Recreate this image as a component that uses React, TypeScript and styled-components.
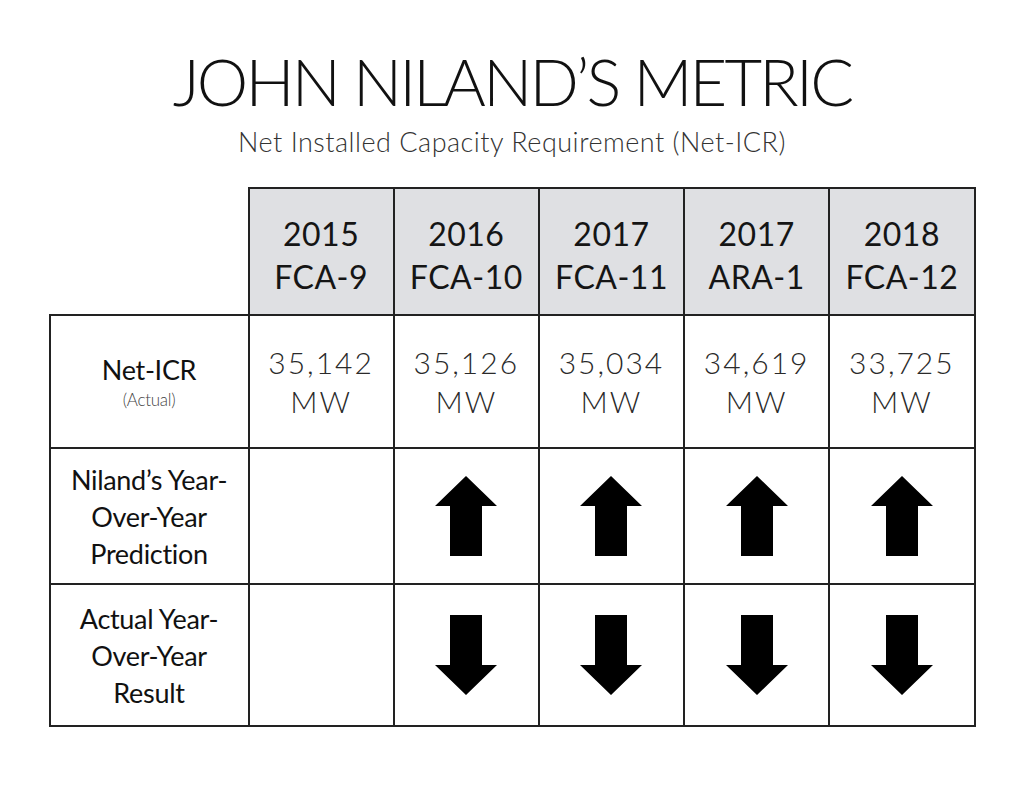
import React from "react";
import styled, {createGlobalStyle} from "styled-components";

const GlobalStyle = createGlobalStyle`
  body {
    margin: 0;
    background: #ffffff;
    font-family: Lato, "DejaVu Sans", sans-serif;
  }
`

type Column = { year: string; auction: string; value: string; arrows: boolean };

const columns: Column[] = [
    {year: "2015", auction: "FCA-9", value: "35,142", arrows: false},
    {year: "2016", auction: "FCA-10", value: "35,126", arrows: true},
    {year: "2017", auction: "FCA-11", value: "35,034", arrows: true},
    {year: "2017", auction: "ARA-1", value: "34,619", arrows: true},
    {year: "2018", auction: "FCA-12", value: "33,725", arrows: true},
];

function Arrow({dir}: { dir: "up" | "down" }) {
    const points = dir === "up"
        ? "31,0 62,30 47,30 47,80 15,80 15,30 0,30"
        : "15,0 47,0 47,50 62,50 31,80 0,50 15,50";
    return (
        <svg width="62" height="80" viewBox="0 0 62 80">
            <polygon points={points} fill="#000"/>
        </svg>
    );
}

export default function App() {
    return (
        <>
            <GlobalStyle/>
            <Page>
                <Title>JOHN NILAND’S METRIC</Title>
                <Subtitle>Net Installed Capacity Requirement (Net-ICR)</Subtitle>
                <Table>
                    <colgroup>
                        <col style={{width: 199}}/>
                        {columns.map((_, i) => <col key={i}/>)}
                    </colgroup>
                    <tbody>
                    <HeaderRow>
                        <Corner/>
                        {columns.map((c, i) => (
                            <HeaderCell key={i}>{c.year}<br/>{c.auction}</HeaderCell>
                        ))}
                    </HeaderRow>
                    <ValueRow>
                        <LabelCell>
                            Net-ICR
                            <Note>(Actual)</Note>
                        </LabelCell>
                        {columns.map((c, i) => (
                            <ValueCell key={i}>{c.value}<br/>MW</ValueCell>
                        ))}
                    </ValueRow>
                    <ArrowRow $height={136}>
                        <LabelCell>Niland’s Year-<br/>Over-Year<br/>Prediction</LabelCell>
                        {columns.map((c, i) => (
                            <ArrowCell key={i}>{c.arrows && <Arrow dir="up"/>}</ArrowCell>
                        ))}
                    </ArrowRow>
                    <ArrowRow $height={142}>
                        <LabelCell>Actual Year-<br/>Over-Year<br/>Result</LabelCell>
                        {columns.map((c, i) => (
                            <ArrowCell key={i}>{c.arrows && <Arrow dir="down"/>}</ArrowCell>
                        ))}
                    </ArrowRow>
                    </tbody>
                </Table>
            </Page>
        </>
    );
}

const Page = styled.div`
  width: 1024px;
  height: 791px;
  display: flex;
  flex-direction: column;
  align-items: center;
  padding-top: 46px;
  box-sizing: border-box;
`

const Title = styled.h1`
  margin: 0;
  font-family: Lato, "DejaVu Sans", sans-serif;
  font-weight: 300;
  font-size: 65px;
  line-height: 70px;
  letter-spacing: -2.8px;
  color: #111;
`

const Subtitle = styled.div`
  margin-top: 9px;
  font-family: Lato, "DejaVu Sans", sans-serif;
  font-weight: 300;
  font-size: 27px;
  line-height: 34px;
  letter-spacing: 0.5px;
  color: #333;
`

const Table = styled.table`
  margin-top: 28px;
  width: 927px;
  border-collapse: collapse;
  table-layout: fixed;
`

const HeaderRow = styled.tr`
  height: 127px;
`

const ValueRow = styled.tr`
  height: 133px;
`

const ArrowRow = styled.tr<{ $height: number }>`
  height: ${p => p.$height}px;
`

const Corner = styled.td`
  border: none;
  padding: 0;
`

const Cell = styled.td`
  border: 2px solid #222;
  padding: 0;
  text-align: center;
  vertical-align: middle;
`

const HeaderCell = styled(Cell)`
  background: #dfe0e3;
  font-size: 32px;
  line-height: 43px;
  font-weight: 400;
  color: #151515;
  letter-spacing: 0.5px;
  padding-top: 6px;
`

const LabelCell = styled(Cell)`
  font-size: 27px;
  line-height: 37px;
  font-weight: 400;
  color: #111;
  letter-spacing: -0.3px;
`

const Note = styled.div`
  font-size: 17px;
  line-height: 24px;
  font-weight: 300;
  color: #444;
`

const ValueCell = styled(Cell)`
  font-size: 30px;
  line-height: 39px;
  font-weight: 300;
  color: #2a2a2a;
  letter-spacing: 2px;
`

const ArrowCell = styled(Cell)`
  svg {
    display: block;
    margin: 0 auto;
  }
`
